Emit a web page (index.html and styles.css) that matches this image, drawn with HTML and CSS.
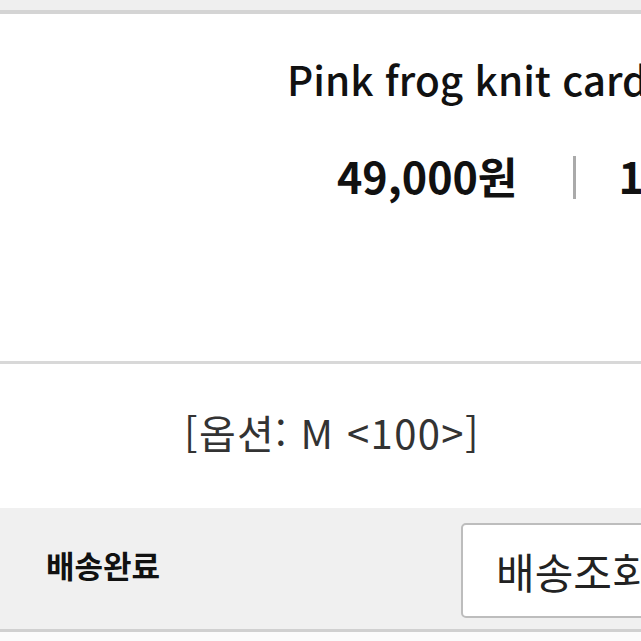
FILE: index.html
```html
<!DOCTYPE html>
<html lang="ko">
<head>
    <meta charset="UTF-8">
    <meta name="viewport" content="width=device-width, initial-scale=1.0">
    <title>주문 상세</title>
    <link rel="stylesheet" href="styles.css">
</head>
<body>
    <div class="top-bar"></div>

    <div class="product">
        <div class="product-info">
            <h2 class="product-name">Pink frog knit cardigan</h2>
            <div class="price-row">
                <span class="price">49,000원</span>
                <span class="divider"></span>
                <span class="qty">1개</span>
            </div>
        </div>
    </div>

    <div class="option">[옵션: M &lt;100&gt;]</div>

    <div class="delivery">
        <span class="status">배송완료</span>
        <button class="track-btn">배송조회</button>
    </div>
</body>
</html>
```

FILE: styles.css
```css
body {
    margin: 0;
    width: 641px;
    height: 641px;
    overflow: hidden;
    font-family: "Noto Sans CJK KR", "Noto Sans", sans-serif;
    background-color: #fbfbfb;
    color: #111;
}
.top-bar {
    height: 10px;
    background: #efefef;
    border-bottom: 4px solid #d4d4d4;
}
.product {
    height: 350px;
    background: white;
    border-bottom: 3px solid #d8d8d8;
    padding-left: 287px;
    box-sizing: border-box;
    overflow: hidden;
}
.product-info {
    white-space: nowrap;
    padding-top: 39px;
}
.product-name {
    margin: 0;
    font-size: 40.5px;
    font-weight: 500;
    line-height: 52px;
}
.price-row {
    display: flex;
    align-items: center;
    margin-top: 39px;
    padding-left: 50px;
}
.price-row span {
    flex-shrink: 0;
}
.price {
    font-size: 43px;
    font-weight: 700;
}
.divider {
    width: 3px;
    height: 43px;
    background: #aaa;
    margin: 4px 42px 0 56px;
}
.qty {
    font-size: 43px;
    font-weight: 700;
}
.option {
    height: 144px;
    box-sizing: border-box;
    padding-bottom: 8px;
    background: white;
    display: flex;
    align-items: center;
    padding-left: 184px;
    font-size: 40px;
    letter-spacing: 1.4px;
    color: #333;
}
.delivery {
    height: 121px;
    background: #f0f0f0;
    border-bottom: 3px solid #d0d0d0;
    display: flex;
    align-items: flex-start;
    justify-content: space-between;
    padding-left: 46px;
}
.status {
    margin-top: 34px;
    font-size: 31px;
    font-weight: 700;
}
.track-btn {
    width: 240px;
    height: 95px;
    margin-top: 15px;
    margin-right: -60px;
    background: white;
    border: 2px solid #bdbdbd;
    border-radius: 5px;
    padding: 0 0 0 33px;
    text-align: left;
    font-family: inherit;
    font-size: 42px;
    color: #222;
}
```
